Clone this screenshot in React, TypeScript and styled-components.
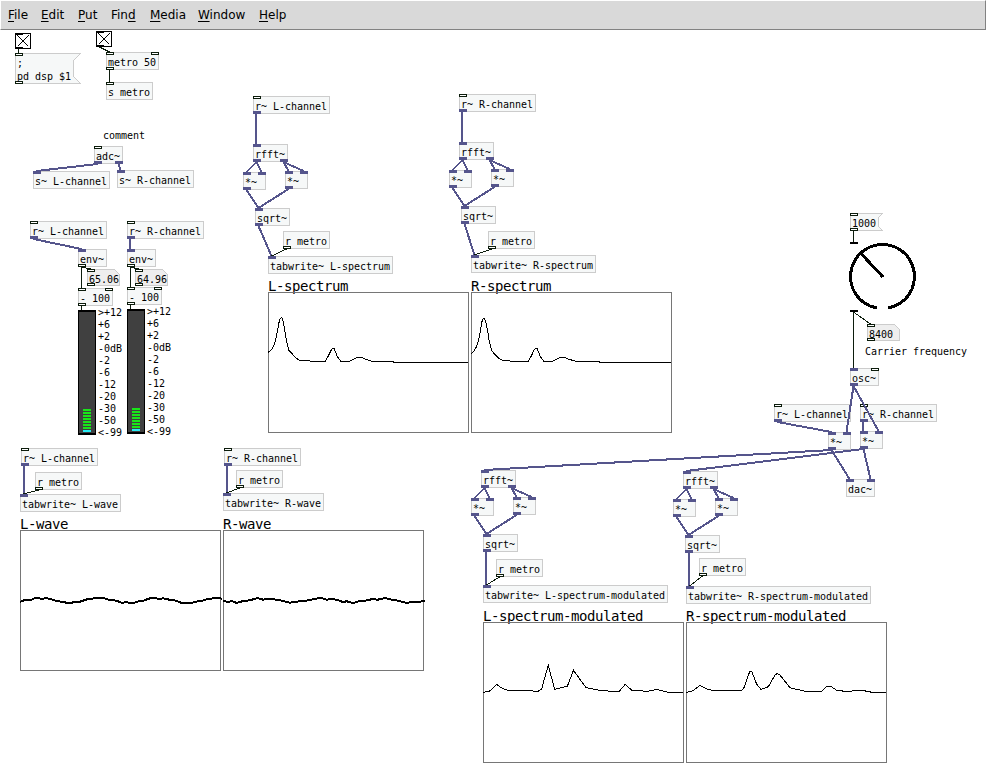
import React from "react";
import styled, { createGlobalStyle, css } from "styled-components";

const MENU_HEIGHT = 30;
const CHAR = 6;
const BOX_HEIGHT = 18;
const SIGNAL = "#55558c";
const CONTROL = "#0c1c0c";

const GlobalStyle = createGlobalStyle`
  html, body { margin: 0; padding: 0; background: #fff; overflow: hidden; }
  * { box-sizing: border-box; }
`;

const Window = styled.div`
  display: flex;
  flex-direction: column;
  width: 986px;
  height: 780px;
  background: #fff;
  color: #000;
`;

const MenuBar = styled.nav`
  display: flex;
  flex: none;
  align-items: center;
  height: ${MENU_HEIGHT}px;
  padding: 0 0 0 7px;
  background: #d9d9d9;
  border: 1px solid;
  border-color: #fff #828282 #828282 #fff;
  font: 12px/16px "DejaVu Sans", sans-serif;
`;

const MenuItem = styled.span<{ $width: number }>`
  flex: none;
  width: ${(p) => p.$width}px;
  white-space: nowrap;
`;

const Mnemonic = styled.span`
  text-decoration: underline;
  text-decoration-thickness: 1px;
  text-underline-offset: 2px;
`;

const Patch = styled.main`
  position: relative;
  flex: 1;
  overflow: hidden;
  font: 10px/13px "DejaVu Sans Mono", monospace;
  letter-spacing: -0.02px;
`;

const placed = css<{ $x: number; $y: number }>`
  position: absolute;
  left: ${(p) => p.$x}px;
  top: ${(p) => p.$y - MENU_HEIGHT}px;
`;

const Box = styled.div<{ $x: number; $y: number; $w: number; $h: number; $plain: boolean }>`
  ${placed}
  width: ${(p) => p.$w}px;
  height: ${(p) => p.$h}px;
  ${(p) => p.$plain && "background: #f6f8f8; box-shadow: inset 0 0 0 1px #ccc;"}
`;

const BoxText = styled.div<{ $top: number }>`
  position: relative;
  padding: ${(p) => p.$top}px 0 0 2px;
  white-space: pre;
`;

const Outline = styled.svg`
  position: absolute;
  inset: 0;
`;

const Port = styled.i<{ $signal: boolean; $out: boolean; $last: boolean }>`
  position: absolute;
  width: 8px;
  height: 3px;
  ${(p) => (p.$out ? "bottom: 0;" : "top: 0;")}
  ${(p) => (p.$last ? "right: 0;" : "left: 0;")}
  background: ${(p) => (p.$signal ? SIGNAL : "#fff")};
  border: 1px solid ${(p) => (p.$signal ? SIGNAL : CONTROL)};
`;

const Comment = styled.div<{ $x: number; $y: number }>`
  ${placed}
  white-space: pre;
`;

const ToggleBox = styled.svg<{ $x: number; $y: number }>`
  ${placed}
`;

const KnobDial = styled.svg<{ $x: number; $y: number }>`
  ${placed}
`;

const Meter = styled.div<{ $x: number; $y: number }>`
  ${placed}
  display: flex;
  gap: 2px;
`;

const MeterBody = styled.div`
  display: flex;
  flex-direction: column;
  justify-content: flex-end;
  align-items: center;
  gap: 1px;
  width: 18px;
  height: 125px;
  padding-bottom: 1px;
  background: #404040;
  border: solid #000;
  border-width: 2px 1px;
`;

const Led = styled.i<{ $low?: boolean }>`
  width: 8px;
  height: 2px;
  background: ${(p) => (p.$low ? "#26ecf4" : "#18e618")};
`;

const Scale = styled.div`
  display: flex;
  flex-direction: column;
  margin-top: -3px;
  line-height: 12px;
`;

const Graph = styled.section<{ $x: number; $y: number }>`
  ${placed}
`;

const GraphName = styled.div`
  height: 15px;
  font-size: 14px;
  line-height: 19px;
  letter-spacing: -0.428px;
  white-space: nowrap;
`;

const GraphArea = styled.svg`
  display: block;
  overflow: visible;
`;

const Cords = styled.svg`
  position: absolute;
  inset: 0;
  pointer-events: none;
`;

type Kind = "obj" | "msg" | "num" | "toggle" | "knob" | "vu";
type Item = { x: number; y: number; text: string; ins: string; outs: string; kind: Kind; w: number; h: number };

/* ports: one letter each, "c" for control and "s" for signal */
const item = (x: number, y: number, text: string, ins = "", outs = "", kind: Kind = "obj"): Item => {
  const lines = text.split("\n");
  const chars = Math.max(...lines.map((l) => l.length));
  let w = Math.max(chars * CHAR + 5, 23);
  let h = BOX_HEIGHT + (lines.length - 1) * 13;
  if (kind === "msg") w += lines.length > 1 ? 7 : 4;
  if (kind === "num") {
    w = 33;
    h = 17;
  }
  if (kind === "toggle") {
    w = 16;
    h = 16;
  }
  if (kind === "knob") {
    w = 66;
    h = 70;
  }
  if (kind === "vu") {
    w = 18;
    h = 125;
  }
  return { x, y, text, ins, outs, kind, w, h };
};

const items: Record<string, Item> = {
  tgl1: item(15, 33, "", "c", "c", "toggle"),
  tgl2: item(96, 31, "", "c", "c", "toggle"),
  dsp: item(15, 53, ";\npd dsp $1", "c", "c", "msg"),
  metro: item(106, 52, "metro 50", "cc", "c"),
  smetro: item(106, 82, "s metro", "c"),
  adc: item(94, 146, "adc~", "c", "ss"),
  sL: item(33, 171, "s~ L-channel", "s"),
  sR: item(117, 170, "s~ R-channel", "s"),

  envInL: item(30, 221, "r~ L-channel", "c", "s"),
  envInR: item(127, 221, "r~ R-channel", "c", "s"),
  envL: item(78, 249, "env~", "s", "c"),
  envR: item(127, 249, "env~", "s", "c"),
  dbL: item(87, 269, "65.06", "c", "c", "num"),
  dbR: item(135, 269, "64.96", "c", "c", "num"),
  subL: item(78, 288, "- 100", "cc", "c"),
  subR: item(127, 287, "- 100", "cc", "c"),
  vuL: item(78, 310, "", "", "", "vu"),
  vuR: item(127, 309, "", "", "", "vu"),

  specInL: item(253, 96, "r~ L-channel", "c", "s"),
  fftL: item(253, 144, "rfft~", "s", "ss"),
  reL: item(243, 172, "*~", "ss", "s"),
  imL: item(285, 171, "*~", "ss", "s"),
  sqrtL: item(255, 208, "sqrt~", "s", "s"),
  specMetroL: item(283, 231, "r metro", "", "c"),
  specTabL: item(268, 256, "tabwrite~ L-spectrum", "s"),

  specInR: item(459, 94, "r~ R-channel", "c", "s"),
  fftR: item(459, 142, "rfft~", "s", "ss"),
  reR: item(449, 170, "*~", "ss", "s"),
  imR: item(491, 169, "*~", "ss", "s"),
  sqrtR: item(461, 206, "sqrt~", "s", "s"),
  specMetroR: item(488, 231, "r metro", "", "c"),
  specTabR: item(471, 255, "tabwrite~ R-spectrum", "s"),

  waveInL: item(21, 448, "r~ L-channel", "c", "s"),
  waveMetroL: item(35, 472, "r metro", "", "c"),
  waveTabL: item(20, 494, "tabwrite~ L-wave", "s"),
  waveInR: item(224, 448, "r~ R-channel", "c", "s"),
  waveMetroR: item(236, 470, "r metro", "", "c"),
  waveTabR: item(223, 493, "tabwrite~ R-wave", "s"),

  preset: item(850, 213, "1000", "c", "c", "msg"),
  knob: item(850, 242, "", "c", "c", "knob"),
  freq: item(867, 324, "8400", "c", "c", "num"),
  osc: item(850, 368, "osc~", "sc", "s"),
  modInL: item(774, 404, "r~ L-channel", "c", "s"),
  modInR: item(860, 404, "r~ R-channel", "c", "s"),
  mulL: item(828, 432, "*~", "ss", "s"),
  mulR: item(860, 431, "*~", "ss", "s"),
  dac: item(846, 479, "dac~", "ss"),

  mFftL: item(481, 470, "rfft~", "s", "ss"),
  mReL: item(471, 498, "*~", "ss", "s"),
  mImL: item(513, 497, "*~", "ss", "s"),
  mSqrtL: item(483, 534, "sqrt~", "s", "s"),
  mMetroL: item(496, 559, "r metro", "", "c"),
  mTabL: item(483, 585, "tabwrite~ L-spectrum-modulated", "s"),

  mFftR: item(683, 471, "rfft~", "s", "ss"),
  mReR: item(673, 499, "*~", "ss", "s"),
  mImR: item(715, 498, "*~", "ss", "s"),
  mSqrtR: item(685, 535, "sqrt~", "s", "s"),
  mMetroR: item(699, 558, "r metro", "", "c"),
  mTabR: item(686, 586, "tabwrite~ R-spectrum-modulated", "s"),
};

/* each cord: source, outlet, target, inlet */
const cords: [string, number, string, number][] = [
  ["tgl1", 0, "dsp", 0],
  ["tgl2", 0, "metro", 0],
  ["metro", 0, "smetro", 0],
  ["adc", 0, "sL", 0],
  ["adc", 1, "sR", 0],
  ["envInL", 0, "envL", 0],
  ["envInR", 0, "envR", 0],
  ["envL", 0, "dbL", 0],
  ["envR", 0, "dbR", 0],
  ["envL", 0, "subL", 0],
  ["envR", 0, "subR", 0],
  ["subL", 0, "vuL", 0],
  ["subR", 0, "vuR", 0],
  ["specInL", 0, "fftL", 0],
  ["specInR", 0, "fftR", 0],
  ["waveInL", 0, "waveTabL", 0],
  ["waveMetroL", 0, "waveTabL", 0],
  ["waveInR", 0, "waveTabR", 0],
  ["waveMetroR", 0, "waveTabR", 0],
  ["preset", 0, "knob", 0],
  ["knob", 0, "freq", 0],
  ["knob", 0, "osc", 0],
  ["osc", 0, "mulL", 1],
  ["osc", 0, "mulR", 1],
  ["modInL", 0, "mulL", 0],
  ["modInR", 0, "mulR", 0],
  ["mulL", 0, "dac", 0],
  ["mulR", 0, "dac", 1],
  ["mulL", 0, "mFftL", 0],
  ["mulR", 0, "mFftR", 0],
];

const spectrumChains = [
  ["fftL", "reL", "imL", "sqrtL", "specMetroL", "specTabL"],
  ["fftR", "reR", "imR", "sqrtR", "specMetroR", "specTabR"],
  ["mFftL", "mReL", "mImL", "mSqrtL", "mMetroL", "mTabL"],
  ["mFftR", "mReR", "mImR", "mSqrtR", "mMetroR", "mTabR"],
];
for (const [fft, re, im, sqrt, metro, tab] of spectrumChains) {
  cords.push(
    [fft, 0, re, 0],
    [fft, 0, re, 1],
    [fft, 1, im, 0],
    [fft, 1, im, 1],
    [re, 0, sqrt, 0],
    [im, 0, sqrt, 0],
    [sqrt, 0, tab, 0],
    [metro, 0, tab, 0],
  );
}

const graphs = [
  {
    name: "L-spectrum", x: 268, y: 292, bold: false,
    points: "0,60.3 3,58.3 5.3,54.7 7.3,49.3 9.3,39.7 11.3,29 12.3,26.5 13.7,25.5 15,28.7 16.7,38 18.3,48 20.7,58 24.3,62 28,66 32,68.5 42,69 57,69.5 60.3,64 63,58.5 64.7,56.5 66.3,56.7 69,64 73,69.5 81,69.5 85,67.7 89,65.5 94,65.5 98,67.3 104,69.3 125,69.7 126,70.5 200,70.5",
  },
  {
    name: "R-spectrum", x: 471, y: 292, bold: false,
    points: "0,61.7 3,59 5.3,55 7.3,49.3 9.3,39.7 11,29.5 12,27 13,26.3 14.7,29.5 16.7,39.5 18.3,49.5 20.7,58.5 24.3,63 28,66.3 32,68.5 42,69.2 57,69.5 60.3,64 63,58 64.7,56.5 66.3,56.7 69,64 73,69.5 81,69.5 85,67.7 89,65.5 94,65.5 98,67.3 105,69.3 128,69.7 129,70.5 200,70.5",
  },
  {
    name: "L-wave", x: 20, y: 530, bold: true,
    points: "0,72 4,70.3 11.7,69.7 15,68 18.3,68 21.7,69 26,68 32.7,69.7 36.7,71.3 43.3,71.7 46.7,73 51.3,73 54,72 60,71.7 67.3,69.3 75,68.3 83.3,68 89.3,70 96.7,70.7 102.3,73 106,72 110,73 114.7,72.7 118.3,71.3 123.3,70.7 130,68.3 135,67.7 138.3,69 143.3,68.3 149.3,69.7 156,70.7 161.7,73 171.7,73 175,71.7 181.7,71 186.7,69.3 193.3,68.3 200,68 202,69",
  },
  {
    name: "R-wave", x: 223, y: 530, bold: true,
    points: "0,71 5.3,72 8.7,71 13.7,73 20.3,71 27,70.3 34.3,68 40.3,69.7 45.3,68.7 53.7,69.7 60.3,71 67,72.7 72,71.7 82,71 90.3,69.3 98,67.7 103.7,69.7 108.7,68.7 115.3,70.3 119.7,72 123.7,71.3 130.3,73 135.3,71.3 142,70.7 149.7,69 154.7,69.7 162,68 168.7,69.7 175.3,70.7 183.7,73 190.3,71.7 197,71.7 202,70.7",
  },
  {
    name: "L-spectrum-modulated", x: 483, y: 622, bold: false,
    points: "0,70.5 6.7,69 13.7,62.5 18.7,66 24.7,68.3 48.7,68.5 52,69.5 55.3,69.2 58.7,67 62,54.7 65.3,43.5 71.7,67.3 84.3,64.3 90.5,48.3 103,65.7 118.7,68.7 136,69.5 142.3,62.3 148.7,68.3 165,69.3 173.7,67.3 184.7,70.3 200,70.5",
  },
  {
    name: "R-spectrum-modulated", x: 686, y: 622, bold: false,
    points: "0,70.5 7,68.7 14,63.3 20.7,67 27,68.5 55.7,68.5 58.3,65.3 61.7,54.7 63.7,49.7 65.7,49.3 70.7,62.3 75,67.5 82.3,64.7 89,53 91.3,51.5 93.7,52.7 104,65.7 119,69.3 135.7,69.5 140.7,64.5 145,64.5 150.7,68.3 159,69.3 177,68.5 187,70.5 200,70.5",
  },
];

const menus: [string, number, number][] = [
  ["File", 0, 33],
  ["Edit", 0, 37],
  ["Put", 0, 33],
  ["Find", 3, 39],
  ["Media", 0, 48],
  ["Window", 0, 61],
  ["Help", 0, 40],
];

const scaleLabels = [">+12", "+6", "+2", "-0dB", "-2", "-6", "-12", "-20", "-30", "-50", "<-99"];

function Ports({ kinds, out }: { kinds: string; out?: boolean }) {
  return (
    <>
      {kinds.split("").map((k, i) => (
        <Port key={i} $signal={k === "s"} $out={!!out} $last={i > 0} />
      ))}
    </>
  );
}

function Shape({ it }: { it: Item }) {
  const r = it.w - 0.5;
  const b = it.h - 0.5;
  const n = it.h > 20 ? 7 : 4;
  const points =
    it.kind === "msg"
      ? `0.5,0.5 ${r},0.5 ${r - n},${n + 0.5} ${r - n},${b - n} ${r},${b} 0.5,${b}`
      : `0.5,0.5 ${r - 5},0.5 ${r},5.5 ${r},${b} 0.5,${b}`;
  return (
    <Outline width={it.w} height={it.h} shapeRendering="crispEdges">
      <polygon points={points} fill={it.kind === "msg" ? "#f6f8f8" : "#eee"} stroke="#ccc" />
    </Outline>
  );
}

function Toggle({ it }: { it: Item }) {
  return (
    <ToggleBox $x={it.x} $y={it.y} width="16" height="16" shapeRendering="crispEdges">
      <rect x="0.5" y="0.5" width="15" height="15" fill="#fff" stroke="#000" />
      <path d="M2.5 2.5 L13.5 13.5 M13.5 2.5 L2.5 13.5" stroke="#000" />
      <path d="M0 1 H8 M0 15 H8" stroke="#000" strokeWidth="2" />
    </ToggleBox>
  );
}

function Knob({ it }: { it: Item }) {
  return (
    <KnobDial $x={it.x - 2} $y={it.y} width="70" height="70" shapeRendering="crispEdges">
      <path d="M2 1 H10 M2 69 H10" stroke="#000" strokeWidth="2" />
      <path
        d="M29 66 A32 32 0 1 1 40 66 M35 35 L12.5 11"
        fill="none"
        stroke="#000"
        strokeWidth="3"
      />
    </KnobDial>
  );
}

function VuMeter({ it }: { it: Item }) {
  return (
    <Meter $x={it.x} $y={it.y}>
      <MeterBody>
        {Array.from({ length: 7 }, (_, i) => (
          <Led key={i} />
        ))}
        <Led $low />
      </MeterBody>
      <Scale>
        {scaleLabels.map((l) => (
          <span key={l}>{l}</span>
        ))}
      </Scale>
    </Meter>
  );
}

function PatchItem({ it }: { it: Item }) {
  if (it.kind === "toggle") return <Toggle it={it} />;
  if (it.kind === "knob") return <Knob it={it} />;
  if (it.kind === "vu") return <VuMeter it={it} />;
  return (
    <Box $x={it.x} $y={it.y} $w={it.w} $h={it.h} $plain={it.kind === "obj"}>
      {it.kind !== "obj" && <Shape it={it} />}
      <Ports kinds={it.ins} />
      <Ports kinds={it.outs} out />
      <BoxText $top={4}>{it.text}</BoxText>
    </Box>
  );
}

function Cord({ cord }: { cord: [string, number, string, number] }) {
  const from = items[cord[0]];
  const to = items[cord[2]];
  const signal = from.outs[cord[1]] === "s";
  const portX = (it: Item, index: number) => it.x + (index > 0 ? it.w - 8 : 0) + 3.5;
  let x1 = portX(from, cord[1]);
  let x2 = portX(to, cord[3]);
  /* near-vertical signal cords snap to one column of whole pixels */
  if (signal && Math.abs(x1 - x2) <= 1) x1 = x2 = Math.max(x1, x2) - 0.5;
  return (
    <line
      x1={x1}
      y1={from.y + from.h}
      x2={x2}
      y2={to.y}
      stroke={signal ? SIGNAL : CONTROL}
      strokeWidth={signal ? 2 : 1}
    />
  );
}

export default function App() {
  return (
    <Window>
      <GlobalStyle />
      <MenuBar>
        {menus.map(([label, at, width]) => (
          <MenuItem key={label} $width={width}>
            {label.slice(0, at)}
            <Mnemonic>{label[at]}</Mnemonic>
            {label.slice(at + 1)}
          </MenuItem>
        ))}
      </MenuBar>
      <Patch>
        {graphs.map((g) => (
          <Graph key={g.name} $x={g.x} $y={g.y - 15}>
            <GraphName>{g.name}</GraphName>
            <GraphArea width="201" height="141" shapeRendering="crispEdges">
              <rect x="0.5" y="0.5" width="200" height="140" fill="none" stroke="#767676" />
              <polyline points={g.points} fill="none" stroke="#000" strokeWidth={g.bold ? 2 : 1} />
            </GraphArea>
          </Graph>
        ))}
        {Object.entries(items).map(([id, it]) => (
          <PatchItem key={id} it={it} />
        ))}
        <Comment $x={103} $y={129}>comment</Comment>
        <Comment $x={865} $y={345}>Carrier frequency</Comment>
        <Cords width="986" height="750" viewBox={`0 ${MENU_HEIGHT} 986 750`} shapeRendering="crispEdges">
          {cords.map((c) => (
            <Cord key={c.join()} cord={c} />
          ))}
        </Cords>
      </Patch>
    </Window>
  );
}
